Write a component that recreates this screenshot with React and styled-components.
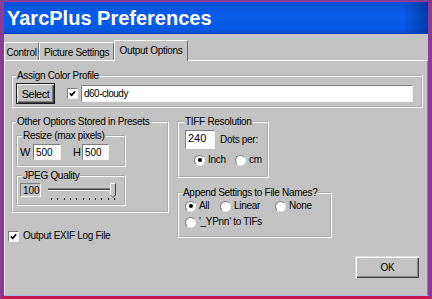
import React from 'react';
import styled, { createGlobalStyle } from 'styled-components';

const GlobalStyle = createGlobalStyle`
  html, body {
    margin: 0;
    padding: 0;
    background: #8b3b93;
  }
  body {
    font-family: "Liberation Sans", Arial, sans-serif;
  }
`;

const Frame = styled.div`
  box-sizing: border-box;
  width: 432px;
  height: 299px;
  display: flex;
  flex-direction: column;
  border-style: solid;
  border-width: 2px 4px 3px 4px;
  border-color: #8b3b93 #8b3b93 #c8174e #8b3b93;
  background: #c3c3c3;
  color: #000;
`;

const TitleBar = styled.div`
  flex: none;
  height: 32px;
  box-sizing: border-box;
  padding: 1px 0 0 3px;
  font: bold 20px/31px "Liberation Sans", Arial, sans-serif;
  color: #fff;
  border-bottom: 1px solid #0844bd;
  background: linear-gradient(to right, rgba(0, 0, 60, 0) 94%, rgba(0, 0, 60, 0.35)),
    linear-gradient(#0951d8, #0a5ce8 45%, #0659e6 85%, #0a4fd4);
`;

const Body = styled.div`
  flex: 1;
  display: flex;
  flex-direction: column;
  padding-top: 6px;
  border-bottom: 1px solid #a7bdea;
  font-size: 10px;
  line-height: 12px;
  letter-spacing: -0.3px;
`;

const TabRow = styled.div`
  display: flex;
  align-items: flex-end;
  height: 20px;
`;

const Tab = styled.div`
  position: relative;
  z-index: ${p => (p.$active ? 1 : 0)};
  box-sizing: border-box;
  width: ${p => p.$w}px;
  height: ${p => (p.$active ? 21 : 18)}px;
  margin-bottom: ${p => (p.$active ? -1 : 0)}px;
  padding-top: 4px;
  text-align: center;
  white-space: nowrap;
  background: #c3c3c3;
  border-top: 1px solid #fff;
  border-left: 1px solid #fff;
  border-right: 1px solid #6f6f6f;
  border-radius: 2px 2px 0 0;
`;

const Panel = styled.div`
  flex: 1;
  display: flex;
  flex-direction: column;
  border-top: 1px solid #fff;
  border-left: 1px solid #e6e6e6;
  border-right: 1px solid #8a8a8a;
  padding: 9px 4px 0 6px;
`;

const Group = styled.fieldset`
  box-sizing: border-box;
  min-width: 0;
  width: ${p => (p.$w ? `${p.$w}px` : 'auto')};
  margin: ${p => p.$mt || 0}px 0 0;
  padding: ${p => p.$pad};
  border: 2px groove #fff;
`;

const Legend = styled.legend`
  margin-left: ${p => p.$ml || 0}px;
  padding: 0 1px;
  height: 12px;
  line-height: 12px;
  white-space: nowrap;
`;

const ProfileRow = styled.div`
  display: flex;
  align-items: center;
`;

const DefaultButton = styled.div`
  box-sizing: border-box;
  width: 39px;
  height: 21px;
  display: flex;
  align-items: center;
  justify-content: center;
  font-size: 11px;
  letter-spacing: -0.5px;
  border: 1px solid #1c1c1c;
  box-shadow: inset 1px 1px 0 #fff, inset -1px -1px 0 #404040, inset -2px -2px 0 #808080;
`;

const Button = styled.div`
  box-sizing: border-box;
  width: 64px;
  height: 22px;
  display: flex;
  align-items: center;
  justify-content: center;
  box-shadow: inset 1px 1px 0 #fff, inset -1px -1px 0 #404040, inset -2px -2px 0 #8a8a8a;
  border-top: 1px solid #dedede;
  border-left: 1px solid #dedede;
`;

const Box = styled.span`
  flex: none;
  box-sizing: border-box;
  width: 11px;
  height: 11px;
  display: flex;
  align-items: center;
  justify-content: center;
  margin-left: ${p => p.$ml || 0}px;
  background: #fff;
  border: 1px solid;
  border-color: #7c7c7c #efefef #efefef #7c7c7c;
`;

const Field = styled.div`
  box-sizing: border-box;
  flex: ${p => (p.$grow ? 1 : 'none')};
  width: ${p => (p.$w ? `${p.$w}px` : 'auto')};
  height: ${p => p.$h || 16}px;
  margin-left: ${p => p.$ml || 0}px;
  margin-right: ${p => p.$mr || 0}px;
  padding: ${p => p.$pt || 2}px 0 0 2px;
  font-size: ${p => p.$fs || 10}px;
  line-height: 12px;
  letter-spacing: ${p => (p.$tight ? -0.5 : 0)}px;
  background: ${p => (p.$dim ? '#c3c3c3' : '#fff')};
  border: 1px solid;
  border-color: #7e7e7e #f4f4f4 #f4f4f4 #7e7e7e;
`;

const Columns = styled.div`
  display: flex;
  align-items: flex-start;
  gap: 8px;
  margin-top: 8px;
`;

const Column = styled.div`
  display: flex;
  flex-direction: column;
  align-items: flex-start;
  width: ${p => p.$w}px;
`;

const FieldRow = styled.div`
  display: flex;
  align-items: ${p => p.$align || 'center'};
  height: ${p => p.$h || 16}px;
  margin-left: ${p => p.$ml || 0}px;
  margin-top: ${p => p.$mt || 0}px;
`;

const Label = styled.span`
  width: ${p => (p.$w ? `${p.$w}px` : 'auto')};
  margin-left: ${p => p.$ml || 0}px;
  font-size: ${p => p.$fs || 10}px;
  white-space: nowrap;
`;

const RadioItem = styled.label`
  display: flex;
  align-items: center;
  width: ${p => (p.$w ? `${p.$w}px` : 'auto')};
  white-space: nowrap;
`;

const RadioCircle = styled.span`
  flex: none;
  box-sizing: border-box;
  width: 11px;
  height: 11px;
  margin-right: 3px;
  border-radius: 50%;
  display: flex;
  align-items: center;
  justify-content: center;
  background: #fff;
  border: 1px solid;
  border-color: #7a7a7a #ececec #ececec #7a7a7a;
`;

const Dot = styled.span`
  width: 4px;
  height: 4px;
  border-radius: 50%;
  background: #000;
`;

const CheckRow = styled.label`
  display: flex;
  align-items: center;
  gap: 4px;
  height: 12px;
  margin: 17px 0 0 -3px;
  white-space: nowrap;
`;

const Footer = styled.div`
  display: flex;
  justify-content: flex-end;
  margin: 14px 4px 0 0;
`;

const Slider = styled.svg`
  display: block;
  margin: -1px 0 0 6px;
`;

const Check = () => (
  <svg width="7" height="7" viewBox="0 0 7 7">
    <path d="M0.8 3.4 L2.7 5.3 L6.2 1.2" fill="none" stroke="#000" strokeWidth="1.6" />
  </svg>
);

const Radio = ({ checked, label, w }) => (
  <RadioItem $w={w}>
    <RadioCircle>{checked && <Dot />}</RadioCircle>
    {label}
  </RadioItem>
);

const ticks = Array.from({ length: 11 }, (_, i) => 4 + i * 6.3);

const QualitySlider = () => (
  <Slider width="70" height="19" viewBox="0 0 70 19">
    <rect x="1" y="6" width="68" height="1" fill="#808080" />
    <rect x="1" y="7" width="68" height="1" fill="#404040" />
    <rect x="1" y="8" width="68" height="1" fill="#fff" />
    {ticks.map(x => (
      <rect key={x} x={Math.round(x)} y="16" width="1" height="2" fill="#222" />
    ))}
    <path d="M63 1 H69 V13 L66 16 L63 13 Z" fill="#c3c3c3" />
    <path d="M63.5 13 V1.5 H68.5" fill="none" stroke="#fff" />
    <path d="M68.5 1.5 V13 L66 15.5" fill="none" stroke="#404040" />
    <path d="M66 15.5 L63.5 13" fill="none" stroke="#808080" />
  </Slider>
);

export default function App() {
  return (
    <>
      <GlobalStyle />
      <Frame>
        <TitleBar>YarcPlus Preferences</TitleBar>
        <Body>
          <TabRow>
            <Tab $w={35}>Control</Tab>
            <Tab $w={75}>Picture Settings</Tab>
            <Tab $w={74} $active>Output Options</Tab>
          </TabRow>
          <Panel>
            <Group $pad="1px 3px 2px 3px">
              <Legend>Assign Color Profile</Legend>
              <ProfileRow>
                <DefaultButton>Select</DefaultButton>
                <Box $ml={12}><Check /></Box>
                <Field $grow $h={17} $ml={3} $mr={5} $tight>d60-cloudy</Field>
              </ProfileRow>
            </Group>

            <Columns>
              <Column $w={158}>
                <Group $w={158} $pad="2px 3px 5px 3px">
                  <Legend>Other Options Stored in Presets</Legend>
                  <Group $w={110} $pad="2px 2px 5px 2px">
                    <Legend $ml={2}>Resize (max pixels)</Legend>
                    <FieldRow>
                      <Label $w={13} $fs={11}>W</Label>
                      <Field $w={28}>500</Field>
                      <Label $w={9} $ml={12} $fs={11}>H</Label>
                      <Field $w={27}>500</Field>
                    </FieldRow>
                  </Group>
                  <Group $w={110} $mt={3} $pad="1px 2px 3px 2px">
                    <Legend $ml={2}>JPEG Quality</Legend>
                    <FieldRow $h={18} $align="flex-start">
                      <Field $w={21} $h={14} $pt={1} $dim>100</Field>
                      <QualitySlider />
                    </FieldRow>
                  </Group>
                </Group>
                <CheckRow>
                  <Box><Check /></Box>
                  Output EXIF Log File
                </CheckRow>
              </Column>

              <Column $w={155}>
                <Group $w={92} $pad="2px 2px 10px 6px">
                  <Legend $ml={-1}>TIFF Resolution</Legend>
                  <FieldRow $h={19}>
                    <Field $w={30} $h={19} $pt={1} $fs={11}>240</Field>
                    <Label $ml={5}>Dots per:</Label>
                  </FieldRow>
                  <FieldRow $h={12} $mt={5} $ml={9}>
                    <Radio checked label="Inch" w={41} />
                    <Radio label="cm" />
                  </FieldRow>
                </Group>
                <Group $w={155} $mt={9} $pad="1px 2px 8px 6px">
                  <Legend $ml={-3}>Append Settings to File Names?</Legend>
                  <FieldRow $h={12}>
                    <Radio checked label="All" w={35} />
                    <Radio label="Linear" w={55} />
                    <Radio label="None" />
                  </FieldRow>
                  <FieldRow $h={12} $mt={4}>
                    <Radio label="'_YPnn' to TIFs" />
                  </FieldRow>
                </Group>
              </Column>
            </Columns>

            <Footer>
              <Button>OK</Button>
            </Footer>
          </Panel>
        </Body>
      </Frame>
    </>
  );
}
